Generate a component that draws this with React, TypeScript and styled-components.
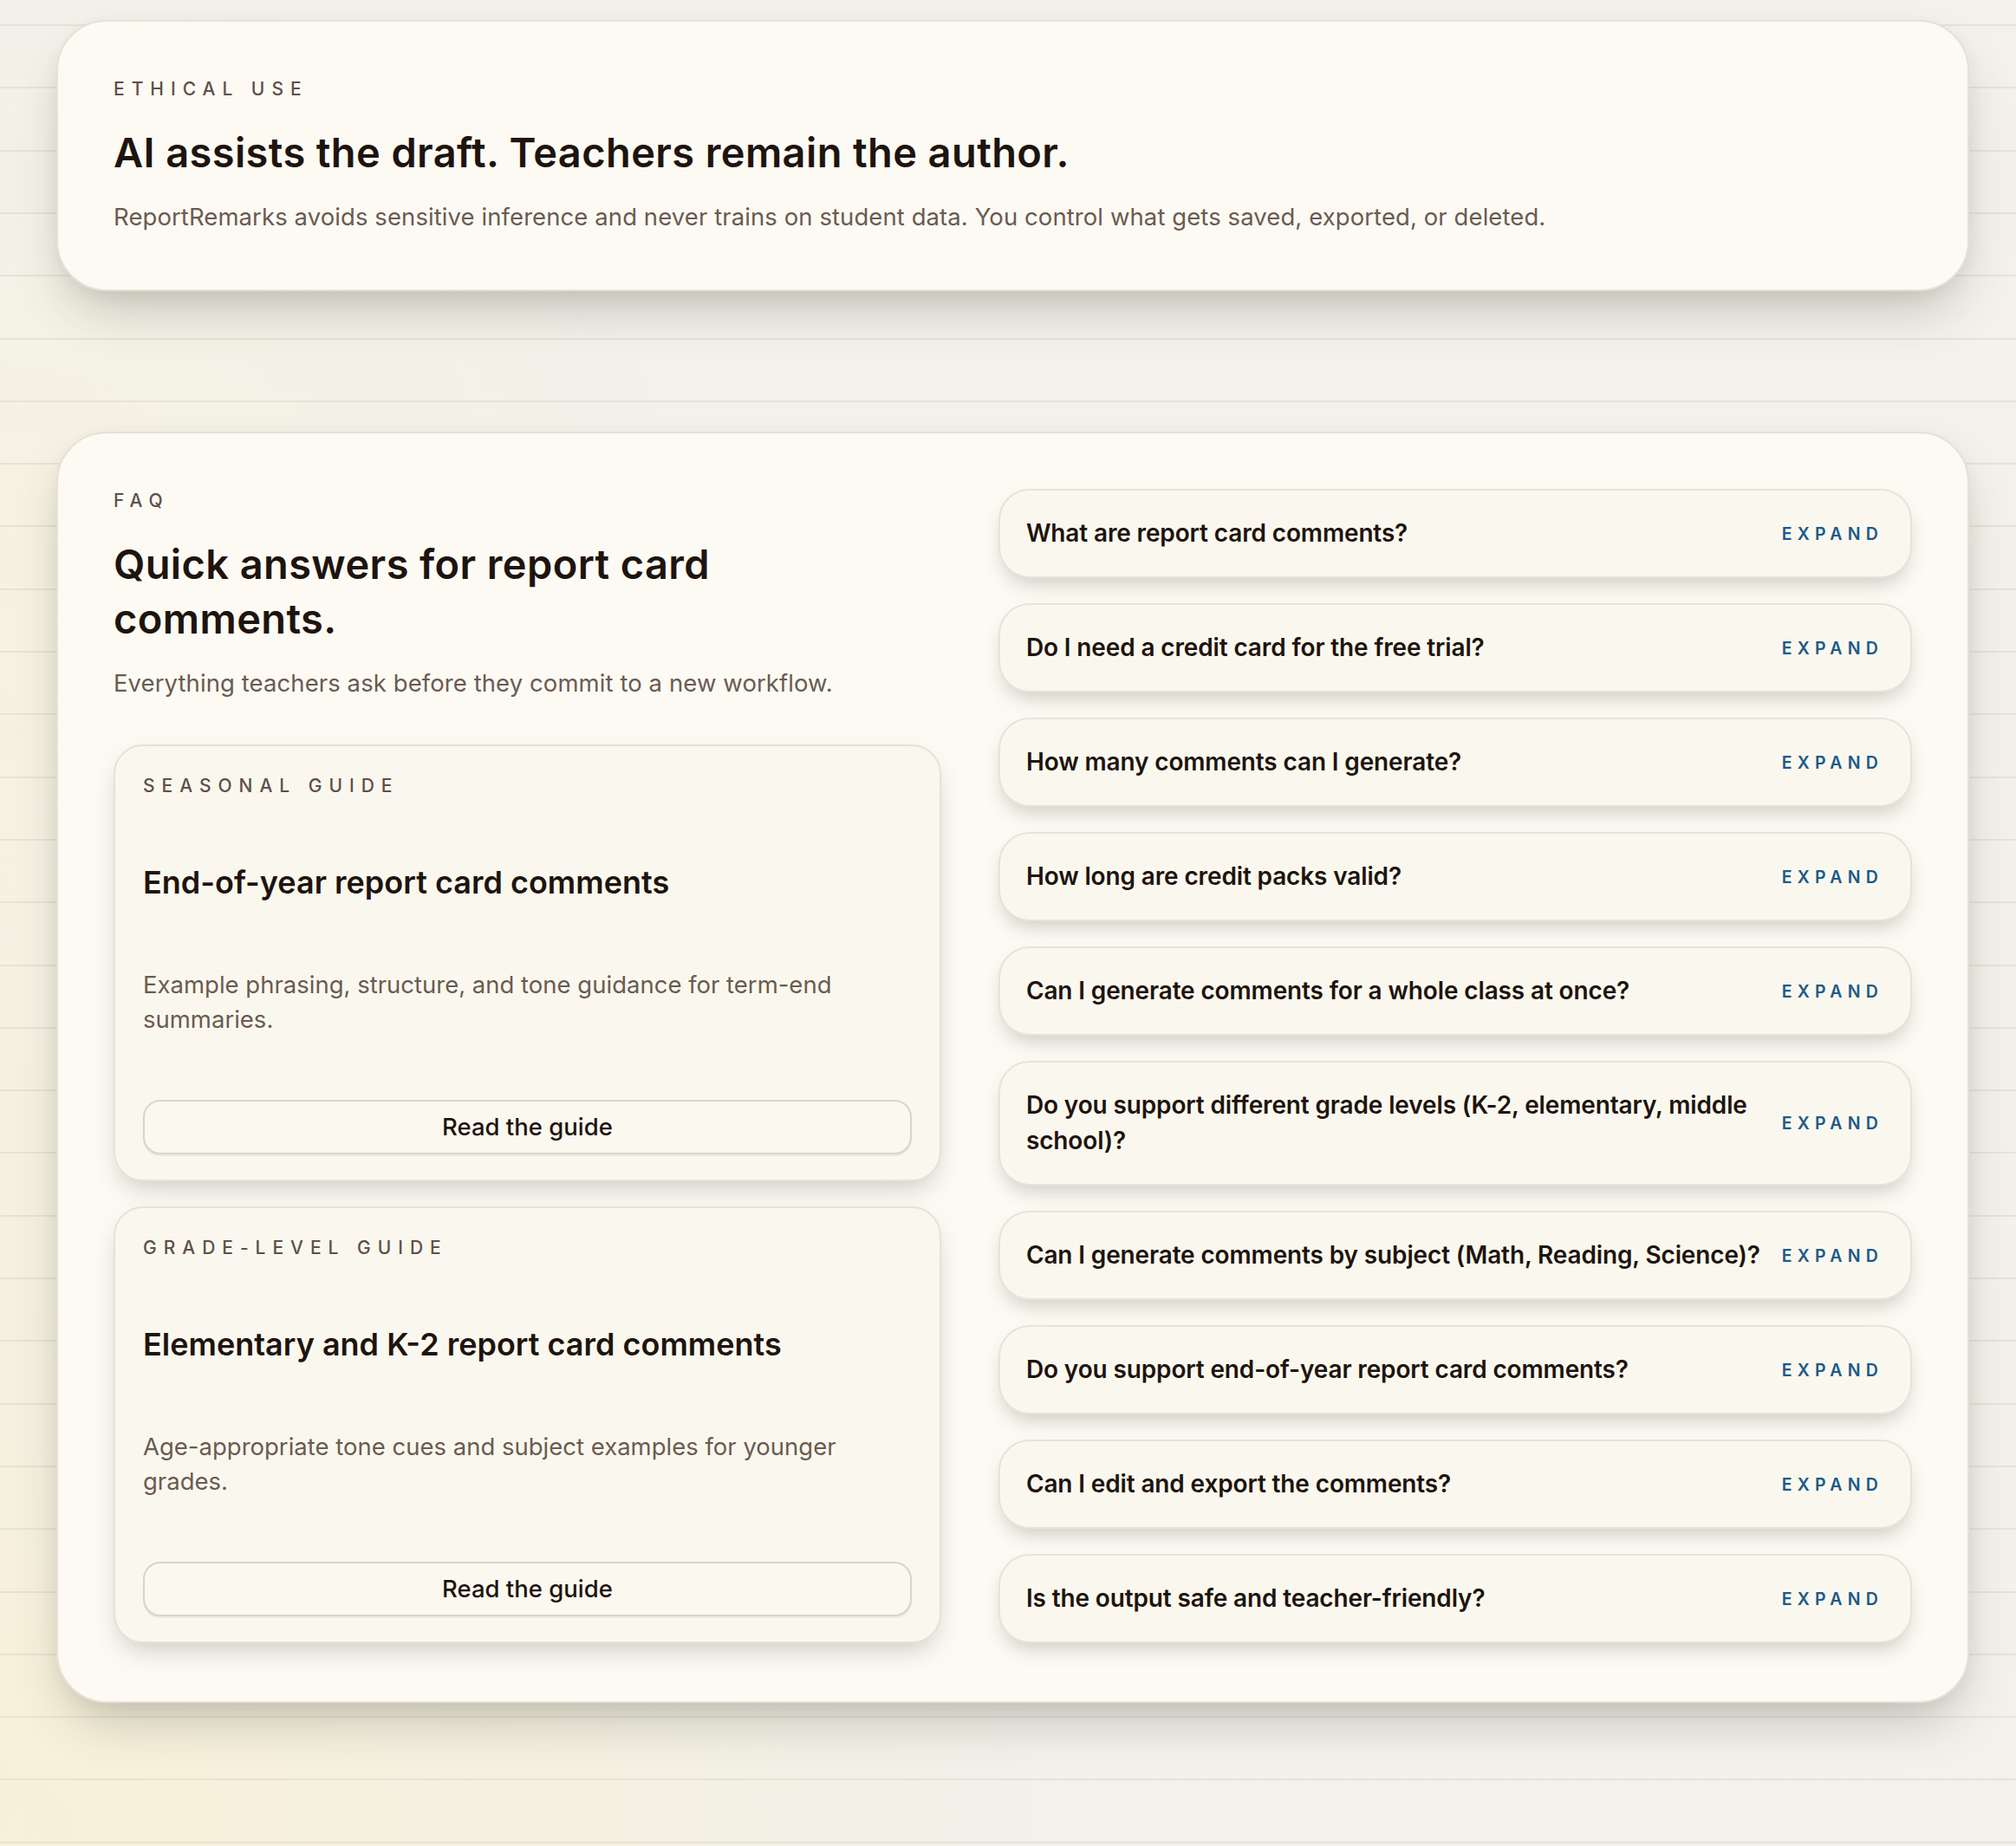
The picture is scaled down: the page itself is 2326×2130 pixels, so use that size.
import React from 'react';
import styled, { createGlobalStyle } from 'styled-components';

const GlobalStyle = createGlobalStyle`
  html,
  body {
    margin: 0;
    padding: 0;
  }

  body {
    font-family: Inter, 'Noto Sans', sans-serif;
    background: #f2f1ea;
    -webkit-font-smoothing: antialiased;
  }

  * {
    box-sizing: border-box;
  }
`;

const Page = styled.main`
  min-height: 100vh;
  padding: 23px 54px 164px 65px;
  display: flex;
  flex-direction: column;
  gap: 162px;
  background:
    repeating-linear-gradient(
      to bottom,
      transparent 0 28px,
      rgba(205, 200, 186, 0.35) 28px 30px,
      transparent 30px 72.3px
    ),
    radial-gradient(circle at 0% 100%, rgba(248, 240, 214, 0.9), rgba(248, 240, 214, 0) 38%),
    radial-gradient(circle at 0% 35%, rgba(248, 242, 222, 0.7), rgba(248, 242, 222, 0) 30%),
    #f2f1ea;
`;

const Panel = styled.section<{ $padBottom?: number }>`
  background: #fcfaf3;
  border: 2px solid #e6e1d6;
  border-radius: 58px;
  padding: 64px 64px ${p => p.$padBottom ?? 64}px;
  box-shadow:
    0 30px 60px -16px rgba(72, 74, 62, 0.32),
    0 6px 18px rgba(72, 74, 62, 0.05);
`;

const Eyebrow = styled.p`
  margin: 0;
  font-size: 21px;
  line-height: 28px;
  font-weight: 500;
  letter-spacing: 0.38em;
  text-transform: uppercase;
  color: #5d5049;
`;

const Heading = styled.h2<{ $narrow?: boolean }>`
  margin: 27px 0 0;
  max-width: ${p => (p.$narrow ? '790px' : 'none')};
  font-size: 47px;
  line-height: 63px;
  font-weight: 600;
  letter-spacing: 0.008em;
  color: #1e140f;
`;

const Lead = styled.p`
  margin: 23px 0 0;
  font-size: 27.5px;
  line-height: 40px;
  letter-spacing: 0.003em;
  color: #6a5b52;
`;

const FaqGrid = styled.div`
  display: grid;
  grid-template-columns: minmax(0, 954fr) minmax(0, 1053fr);
  gap: 66px;
`;

const IntroColumn = styled.div`
  display: flex;
  flex-direction: column;
`;

const GuideStack = styled.div`
  flex: 1;
  margin-top: 51px;
  display: flex;
  flex-direction: column;
  gap: 29px;
`;

const GuideCard = styled.article`
  flex: 1;
  display: flex;
  flex-direction: column;
  justify-content: space-between;
  padding: 32px 32px 29px;
  background: #faf8ee;
  border: 2px solid #e7e2d6;
  border-radius: 34px;
  box-shadow: 0 14px 30px -8px rgba(72, 74, 62, 0.28);
`;

const GuideTitle = styled.h3`
  margin: 0;
  font-size: 36px;
  line-height: 48px;
  font-weight: 600;
  color: #1e140f;
`;

const GuideText = styled.p`
  margin: 0;
  font-size: 27.5px;
  line-height: 40px;
  color: #6a5b52;
`;

const GuideButton = styled.button`
  width: 100%;
  height: 63px;
  padding: 0;
  border: 2px solid #d9d4ca;
  border-radius: 20px;
  background: #faf8ef;
  box-shadow: 0 2px 0 rgba(80, 76, 64, 0.08);
  font-family: inherit;
  font-size: 27.5px;
  font-weight: 500;
  color: #1e140f;
  cursor: pointer;
`;

const FaqList = styled.div`
  display: flex;
  flex-direction: column;
  gap: 29px;
`;

const FaqItem = styled.div`
  display: flex;
  align-items: center;
  justify-content: space-between;
  gap: 16px;
  padding: 29px 31px 29px 30px;
  background: #faf8ee;
  border: 2px solid #e8e3d7;
  border-radius: 36px;
  box-shadow: 0 12px 22px -6px rgba(72, 74, 62, 0.26);
`;

const Question = styled.span`
  flex: 1;
  font-size: 28px;
  line-height: 41px;
  font-weight: 600;
  letter-spacing: -0.005em;
  color: #1e140f;
`;

const Expand = styled.span`
  flex-shrink: 0;
  font-size: 19.5px;
  font-weight: 600;
  letter-spacing: 0.32em;
  text-transform: uppercase;
  color: #1d5a8b;
`;

const questions = [
  'What are report card comments?',
  'Do I need a credit card for the free trial?',
  'How many comments can I generate?',
  'How long are credit packs valid?',
  'Can I generate comments for a whole class at once?',
  'Do you support different grade levels (K-2, elementary, middle school)?',
  'Can I generate comments by subject (Math, Reading, Science)?',
  'Do you support end-of-year report card comments?',
  'Can I edit and export the comments?',
  'Is the output safe and teacher-friendly?',
];

const guides = [
  {
    tag: 'Seasonal guide',
    title: 'End-of-year report card comments',
    text: 'Example phrasing, structure, and tone guidance for term-end summaries.',
  },
  {
    tag: 'Grade-level guide',
    title: 'Elementary and K-2 report card comments',
    text: 'Age-appropriate tone cues and subject examples for younger grades.',
  },
];

const App: React.FC = () => (
  <>
    <GlobalStyle />
    <Page>
      <Panel>
        <Eyebrow>Ethical use</Eyebrow>
        <Heading>AI assists the draft. Teachers remain the author.</Heading>
        <Lead>
          ReportRemarks avoids sensitive inference and never trains on student data. You control
          what gets saved, exported, or deleted.
        </Lead>
      </Panel>

      <Panel $padBottom={67}>
        <FaqGrid>
          <IntroColumn>
            <Eyebrow>FAQ</Eyebrow>
            <Heading $narrow>Quick answers for report card comments.</Heading>
            <Lead>Everything teachers ask before they commit to a new workflow.</Lead>
            <GuideStack>
              {guides.map(g => (
                <GuideCard key={g.title}>
                  <Eyebrow>{g.tag}</Eyebrow>
                  <GuideTitle>{g.title}</GuideTitle>
                  <GuideText>{g.text}</GuideText>
                  <GuideButton type="button">Read the guide</GuideButton>
                </GuideCard>
              ))}
            </GuideStack>
          </IntroColumn>

          <FaqList>
            {questions.map(q => (
              <FaqItem key={q}>
                <Question>{q}</Question>
                <Expand>Expand</Expand>
              </FaqItem>
            ))}
          </FaqList>
        </FaqGrid>
      </Panel>
    </Page>
  </>
);

export default App;
